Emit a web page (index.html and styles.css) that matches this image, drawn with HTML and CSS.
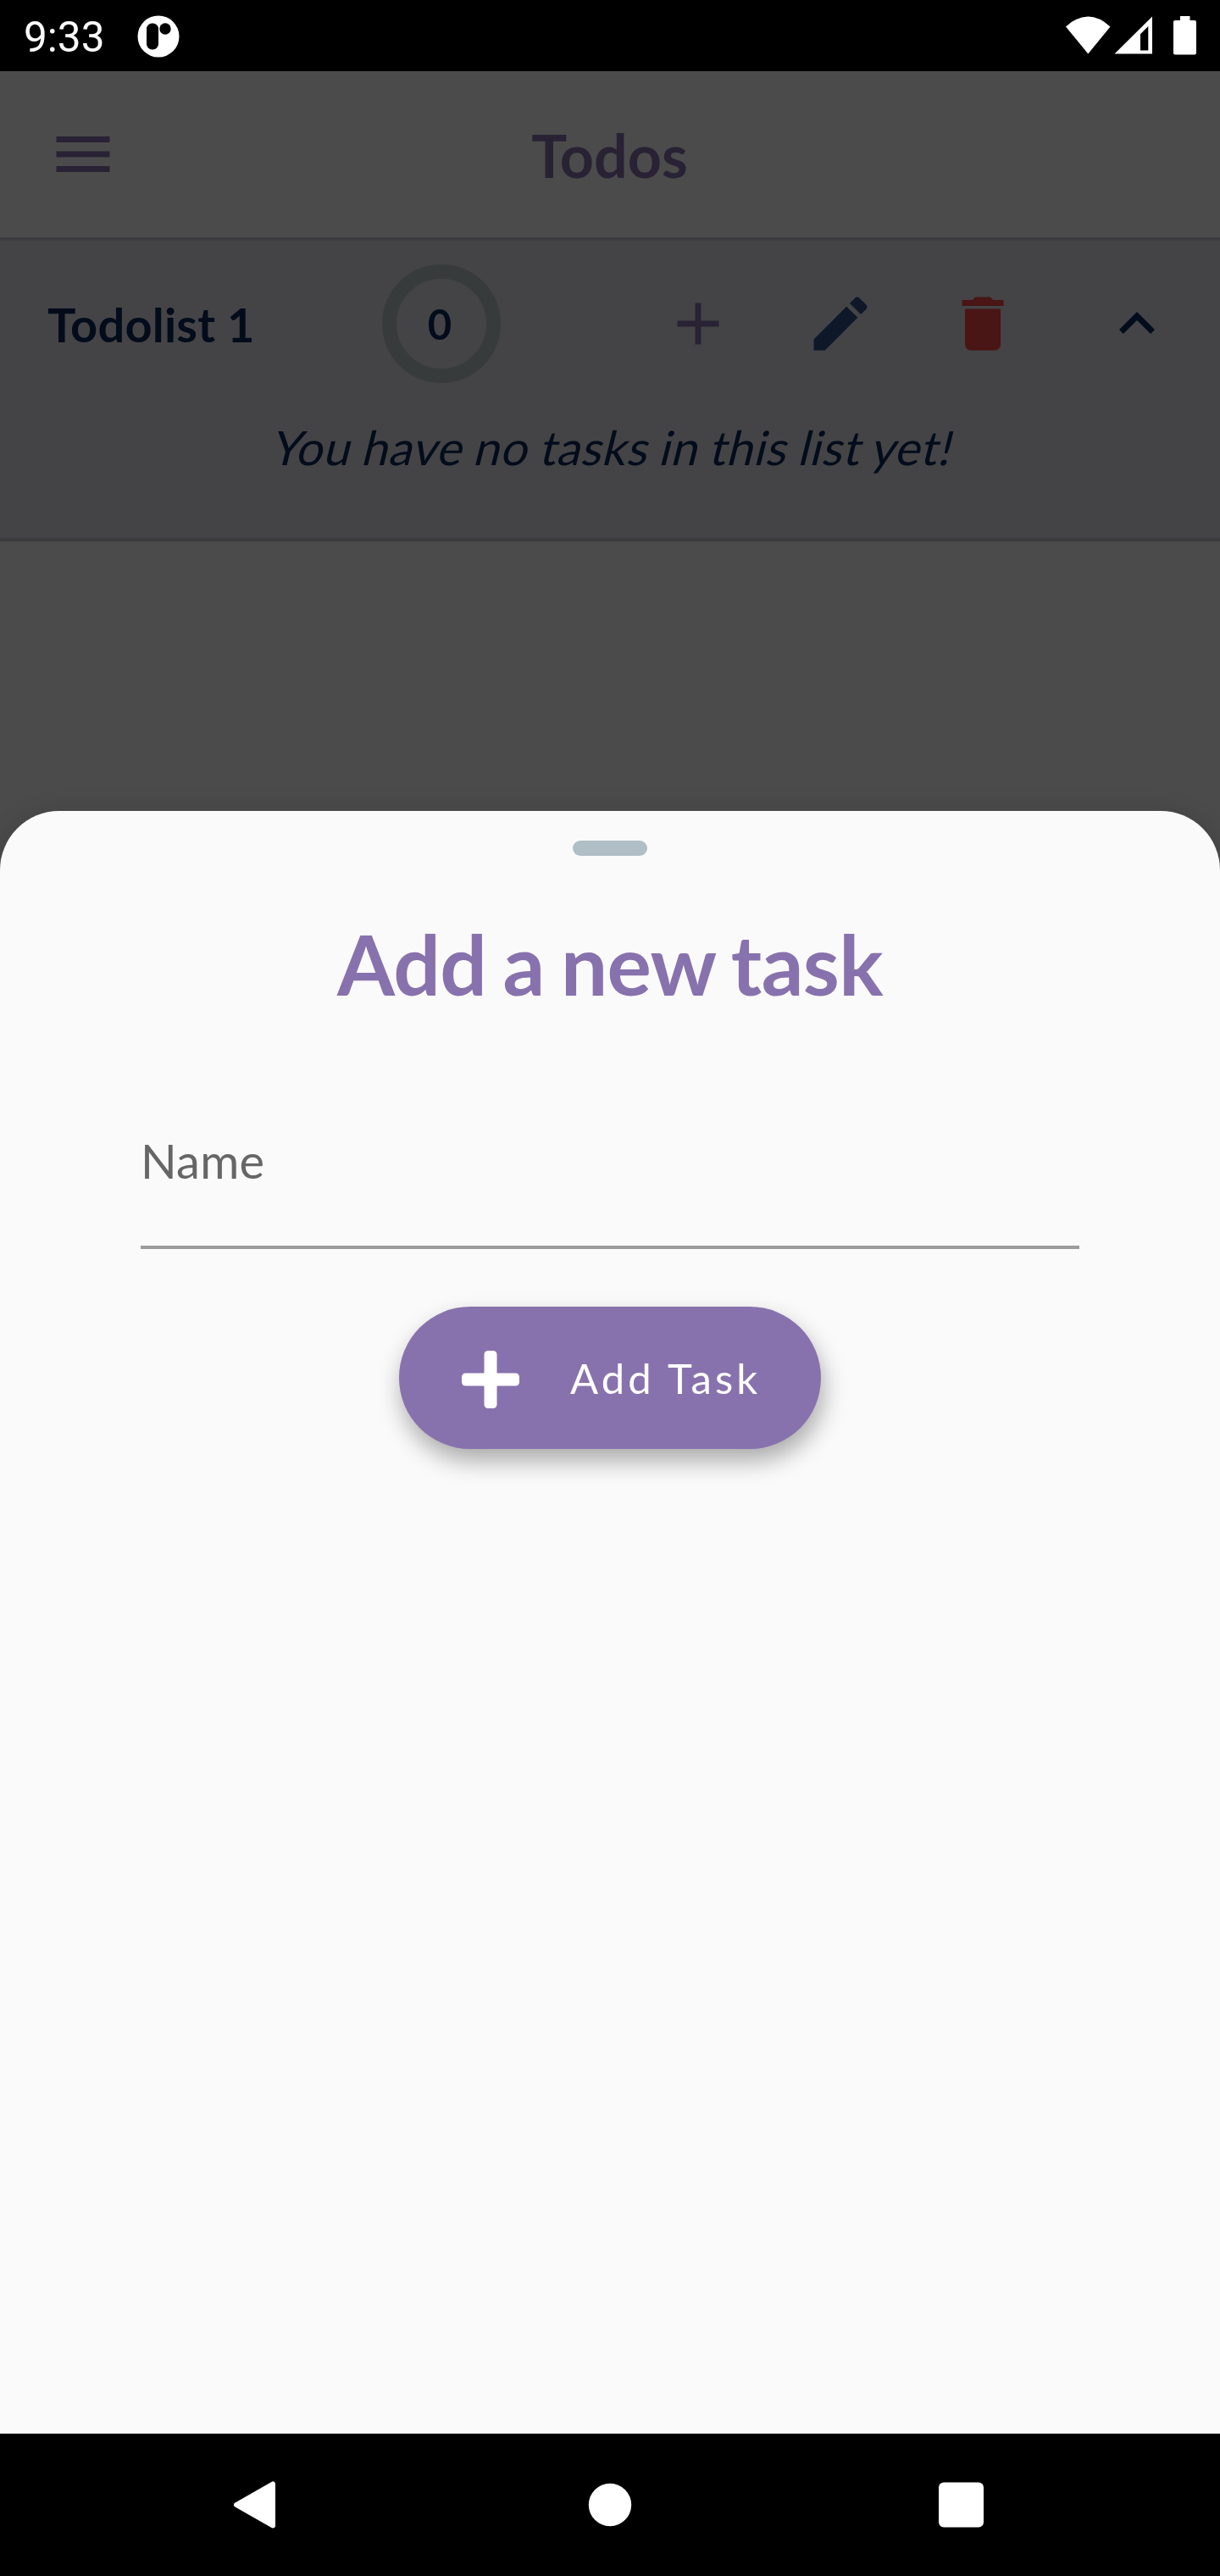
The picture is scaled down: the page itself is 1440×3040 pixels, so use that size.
FILE: index.html
```html
<!DOCTYPE html>
<html lang="en">
<head>
<meta charset="utf-8">
<title>Todos</title>
<link rel="stylesheet" href="styles.css">
</head>
<body>
<div class="phone">
  <header class="status">
    <span class="clock">9:33</span>
    <svg class="notice" viewBox="0 0 50 50"><circle cx="25" cy="25" r="24.5" fill="#fff"/><rect x="11" y="9.5" width="14" height="31" rx="6.5"/><circle cx="33" cy="16" r="6.7"/></svg>
    <svg class="signals" viewBox="0 0 154 46" fill="#fff">
      <path d="M0 12.500Q26.300-11.500 52.500 12.500L26.300 44.500z"/>
      <path fill-rule="evenodd" d="M102 0.500V44.500H57.500zM97.300 12L88 21.200V40.500H97.300z"/>
      <path d="M135 0h11.500v5h5.500q2 0 2 2v36.500q0 2-2 2h-23q-2 0-2-2v-36.500q0-2 2-2h6z"/>
    </svg>
  </header>
  <main class="screen">
    <div class="appbar">
      <svg class="icon" viewBox="0 0 24 24"><path d="M3 18h18v-2H3v2zm0-5h18v-2H3v2zm0-7v2h18V6H3z"/></svg>
      <h1>Todos</h1>
    </div>
    <section class="list">
      <div class="row">
        <h2>Todolist 1</h2>
        <div class="ring">0</div>
        <div class="actions">
          <svg class="icon add" viewBox="0 0 24 24"><path d="M19 13h-6v6h-2v-6H5v-2h6V5h2v6h6v2z"/></svg>
          <svg class="icon edit" viewBox="0 0 24 24"><path d="M3 17.250V21h3.750L17.810 9.940l-3.750-3.750L3 17.250zM20.710 7.040c.39-.39.39-1.020 0-1.410l-2.340-2.340c-.39-.39-1.020-.39-1.410 0l-1.830 1.830 3.750 3.750 1.830-1.830z"/></svg>
          <svg class="icon delete" viewBox="0 0 24 24"><path d="M6 19c0 1.100.9 2 2 2h8c1.100 0 2-.9 2-2V7H6v12zM19 4h-3.500l-1-1h-5l-1 1H5v2h14V4z"/></svg>
        </div>
        <svg class="icon toggle" viewBox="0 0 24 24"><path d="M12 8l-6 6 1.410 1.410L12 10.830l4.590 4.580L18 14z"/></svg>
      </div>
      <p class="empty">You have no tasks in this list yet!</p>
    </section>
    <div class="scrim"></div>
    <section class="sheet">
      <div class="handle"></div>
      <h2 class="title">Add a new task</h2>
      <label class="field">Name</label>
      <button class="submit" type="button">
        <svg viewBox="0 0 68 68" fill="#fff"><rect x="26.500" width="15" height="68" rx="4.500"/><rect y="26.500" width="68" height="15" rx="4.500"/></svg>
        <span>Add Task</span>
      </button>
    </section>
  </main>
  <nav class="navbar">
    <svg viewBox="0 0 64 56"><path d="M52 3.500V52.500L9 28z" stroke="#fff" stroke-width="6" stroke-linejoin="round"/></svg>
    <svg viewBox="0 0 64 56"><circle cx="32" cy="28" r="25.200"/></svg>
    <svg viewBox="0 0 64 56"><rect x="2" y="1.500" width="53" height="53" rx="6"/></svg>
  </nav>
</div>
</body>
</html>
```
FILE: styles.css
```css
* { box-sizing: border-box; }
body { margin: 0; background: #000; font-family: Lato, "Open Sans", sans-serif; }
h1, h2, p { margin: 0; }
svg { display: block; flex: none; }

.phone { width: 1440px; height: 3040px; display: flex; flex-direction: column; overflow: hidden; }

.status { height: 84px; display: flex; align-items: center; padding: 0 28px; background: #000; color: #fff; }
.clock { width: 134px; font: 400 49.500px/84px Roboto, sans-serif; padding-top: 3px; }
.notice { width: 50px; height: 50px; margin-top: 1px; }
.signals { width: 154px; height: 46px; margin-left: auto; }

.screen { position: relative; flex: 1; background: #fafafa; }
.scrim { position: absolute; inset: 0; background: rgba(0, 0, 0, 0.7); }
.icon { width: 84px; height: 84px; fill: currentColor; }

.appbar { height: 196px; display: grid; grid-template-columns: 84px 1fr 84px; align-items: center; padding: 0 56px; color: #8872ad; }
.appbar h1 { font-size: 70px; font-weight: 700; line-height: 84px; padding: 2px 1px 0 0; text-align: center; }

.list { height: 359px; background: #e3e3e9; border: solid #c8c8d2; border-width: 4px 0; color: #0a2a5a; }
.row { display: grid; grid-template-columns: 395px 140px 611px 84px; align-items: center; height: 140px; margin-top: 28px; padding: 0 56px; }
.row h2 { font-size: 56px; font-weight: 700; line-height: 68px; margin-top: 2px; letter-spacing: 0.200px; }
.ring { width: 140px; height: 140px; border: 17.500px solid #bac5c9; border-radius: 50%; font-size: 49px; font-weight: 700; line-height: 106px; text-align: center; padding-right: 4px; }
.actions { display: flex; gap: 84px; padding-left: 191px; }
.add { color: #8872ad; }
.edit { color: #2f508a; }
.delete { color: #f44949; }
.toggle { margin-left: 98px; }
.empty { margin-top: 42px; font-size: 56px; line-height: 68px; letter-spacing: 0.670px; word-spacing: -1.800px; text-align: center; transform: skewX(-14deg); transform-origin: 50% 54px; }

.sheet { position: absolute; left: 0; right: 0; top: 873px; bottom: 0; display: flex; flex-direction: column; align-items: center; background: #fafafa; border-radius: 70px 70px 0 0; box-shadow: 0 0 28px rgba(0, 0, 0, 0.12); }
.handle { width: 88px; height: 18px; margin-top: 35px; border-radius: 9px; background: #b0bec5; }
.title { margin-top: 68px; font-size: 98px; font-weight: 700; line-height: 118px; letter-spacing: -0.600px; word-spacing: -4px; color: #8872ad; }
.field { width: 1108px; height: 147px; margin-top: 131px; padding-top: 9px; border-bottom: 4px solid #9c9c9c; font-size: 56px; line-height: 68px; letter-spacing: 0.200px; color: #666; }
.submit { width: 498px; height: 168px; margin-top: 68px; padding: 3px 0 0 74px; display: flex; align-items: center; gap: 60px; border: 0; border-radius: 84px; background: #8872ad; color: #fff; font-family: inherit; font-size: 49px; letter-spacing: 4.100px; box-shadow: 3px 14px 28px rgba(0, 0, 0, 0.32); }
.submit svg { width: 68px; height: 68px; }
.submit span { margin-bottom: 4px; }

.navbar { height: 168px; display: flex; align-items: center; justify-content: space-between; padding: 0 270px; background: #000; }
.navbar svg { width: 64px; height: 56px; fill: #fff; }
```
